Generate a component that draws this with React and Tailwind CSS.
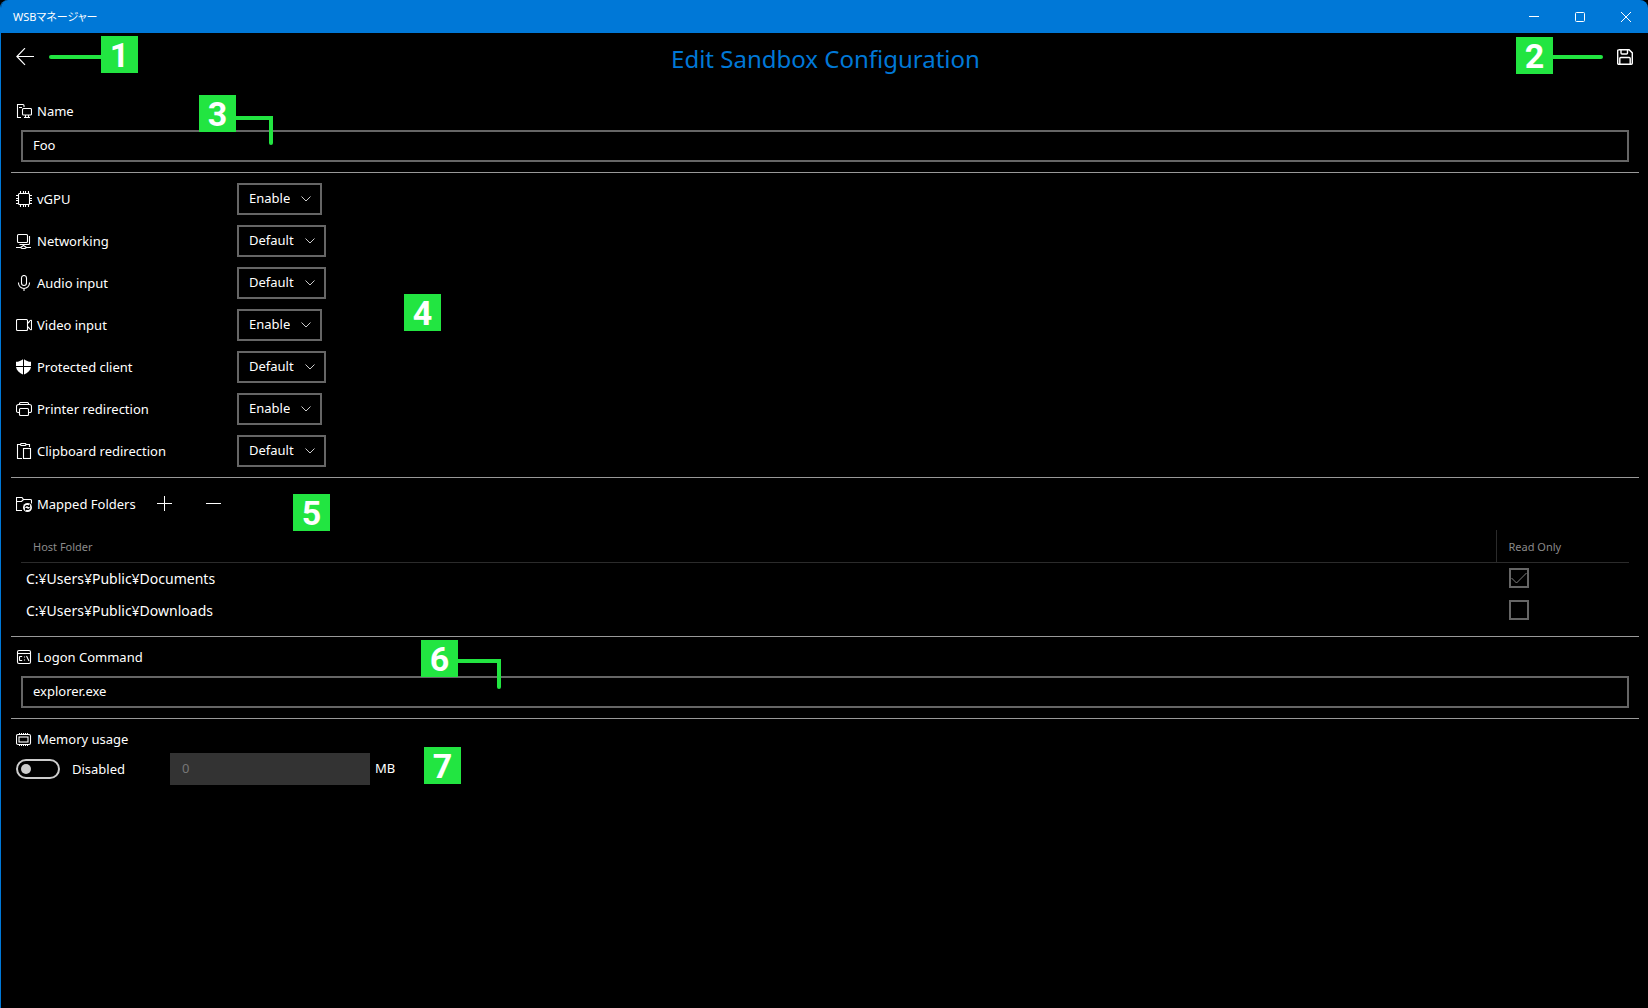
import React, { useState } from 'react';

function Icon({ children, className = '' }) {
  return (
    <svg
      viewBox="0 0 16 16"
      className={`h-4 w-4 shrink-0 ${className}`}
      fill="none"
      stroke="currentColor"
      strokeWidth="1.100"
      aria-hidden="true"
    >
      {children}
    </svg>
  );
}

const icons = {
  name: (
    <Icon>
      <path d="M5 14.500H1.500v-13h5.500a1 1 0 0 1 1 1V4M3 4.500h3" />
      <rect x="6.500" y="5.500" width="9" height="6.500" rx="1" />
      <path d="M9.500 12v2.500M12.500 12v2.500M8 14.500h6" />
    </Icon>
  ),
  gpu: (
    <Icon>
      <rect x="2.500" y="2.500" width="11" height="11" rx="1" />
      <path d="M4.500 0v2.500M7.500 0v2.500M9.500 0v2.500M12.500 0v2.500M4.500 13.500V16M7.500 13.500V16M9.500 13.500V16M12.500 13.500V16M0 4.500h2.500M0 7.500h2.500M0 9.500h2.500M0 12.500h2.500M13.500 4.500H16M13.500 7.500H16M13.500 9.500H16M13.500 12.500H16" />
    </Icon>
  ),
  network: (
    <Icon>
      <rect x="1.500" y="1.500" width="10" height="8" rx="1" />
      <path d="M13.500 3v7.500a1 1 0 0 1-1 1H3.500M0 14.500h4.500M10.500 14.500H15M7.500 11.500v1M4.500 14.500l3-2 3 2-1.500 1H6z" />
    </Icon>
  ),
  mic: (
    <Icon>
      <rect x="5.500" y=".5" width="5" height="10" rx="2.500" />
      <path d="M2.500 7.500v.5a5.500 5.500 0 0 0 11 0v-.5M8 13v3" />
    </Icon>
  ),
  video: (
    <Icon>
      <rect x=".5" y="2.500" width="11" height="11" rx="1" />
      <path d="M11.500 6.500l3-3c.5-.4 1-.2 1 .4v8.200c0 .6-.5.8-1 .4l-3-3" />
    </Icon>
  ),
  shield: (
    <Icon>
      <path
        stroke="none"
        fill="currentColor"
        d="M7 .2V7H0V2.800C2.700 2.700 5 1.800 7 .2zM8 .2c2 1.600 4.300 2.500 7 2.600V7H8zM0 8h7v7.600C3.500 14 .5 11.500 0 8zM8 8h7c-.5 3.500-3.500 6-7 7.600z"
      />
    </Icon>
  ),
  printer: (
    <Icon>
      <path d="M3.500 11.500H2a1.500 1.500 0 0 1-1.500-1.500V5.500A2 2 0 0 1 2.500 3.500h11a2 2 0 0 1 2 2v4.500a1.500 1.500 0 0 1-1.500 1.500h-1.500" />
      <path d="M3.500 3.500V2.500a1 1 0 0 1 1-1h7a1 1 0 0 1 1 1V3.500" />
      <rect x="3.500" y="7.500" width="9" height="7" rx="1" />
    </Icon>
  ),
  clipboard: (
    <Icon>
      <path d="M6 15.500H1.500v-14h3M10 1.500h3.500V4" />
      <rect x="4.500" y=".5" width="5.500" height="2" rx="1" />
      <rect x="7.500" y="5.500" width="7" height="10" />
    </Icon>
  ),
  folder: (
    <Icon>
      <path d="M6 14.500H.500v-13h5.500l1.500 2h7a1 1 0 0 1 1 1v3M.5 5.500h5L7.500 3.500" />
      <circle cx="11.500" cy="11.500" r="4.500" fill="currentColor" stroke="none" />
      <path className="stroke-black" d="M9 11.500a2.500 2.500 0 0 1 4-1.500M14 11.500a2.500 2.500 0 0 1-4 1.500M13.500 8.500V10.500H11.500M9.500 14.500v-2h2" />
    </Icon>
  ),
  console: (
    <Icon>
      <rect x="1.500" y="1.500" width="13" height="13" rx="1.500" />
      <path d="M1.500 4.500h13" />
      <path d="M6.200 7.500H4a.5.5 0 0 0-.5.5v3a.5.5 0 0 0 .5.500h2.200M8.500 7.500v1M8.500 10.500v1M10.500 7l2.500 5" />
    </Icon>
  ),
  memory: (
    <Icon>
      <rect x=".5" y="3.500" width="14" height="10" rx="1.500" />
      <rect x="3" y="6" width="9" height="5" />
      <path strokeDasharray="1 1" d="M3 2.500h10M3 14.500h10" />
    </Icon>
  ),
};

function Badge({ n, className }) {
  return (
    <span
      className={`absolute z-10 flex h-[37px] w-[37px] items-center justify-center bg-[#22e541] font-[Roboto,Arial,sans-serif] text-[34px] leading-none font-bold text-white ${className}`}
    >
      {n}
    </span>
  );
}

function Line({ className }) {
  return <span className={`absolute z-10 bg-[#22e541] ${className}`} />;
}

function SectionLabel({ icon, children, htmlFor }) {
  return (
    <label htmlFor={htmlFor} className="flex h-5 items-center gap-1 pl-[5px]">
      {icons[icon]}
      <span className="pt-[2px] pl-px">{children}</span>
    </label>
  );
}

const settings = [
  ['vgpu', 'gpu', 'vGPU', 'Enable'],
  ['net', 'network', 'Networking', 'Default'],
  ['audio', 'mic', 'Audio input', 'Default'],
  ['video', 'video', 'Video input', 'Enable'],
  ['client', 'shield', 'Protected client', 'Default'],
  ['printer', 'printer', 'Printer redirection', 'Enable'],
  ['clip', 'clipboard', 'Clipboard redirection', 'Default'],
];

function Setting({ id, icon, label, initial }) {
  const [value, setValue] = useState(initial);
  return (
    <div className="flex h-8 items-center">
      <div className="w-[226px] shrink-0">
        <SectionLabel icon={icon} htmlFor={id}>
          {label}
        </SectionLabel>
      </div>
      <div className="relative">
        <select
          id={id}
          value={value}
          onChange={(e) => setValue(e.target.value)}
          className="block h-8 appearance-none border-2 border-[#666] bg-black pr-[30px] pl-[10px] text-white [field-sizing:content]"
        >
          <option>Default</option>
          <option>Enable</option>
          <option>Disable</option>
        </select>
        <svg
          viewBox="0 0 10 6"
          className="pointer-events-none absolute top-[13px] right-[11px] h-[6px] w-[10px] text-[#ccc]"
          fill="none"
          stroke="currentColor"
          aria-hidden="true"
        >
          <path d="M.5.5 5 5 9.500.5" />
        </svg>
      </div>
    </div>
  );
}

function FolderRow({ path, readOnly }) {
  return (
    <tr className="h-8">
      <td className="pt-[2px] pl-[5px] text-sm">{path}</td>
      <td className="pl-[13px]">
        <span className="relative block h-5 w-5">
          <input
            type="checkbox"
            checked={readOnly}
            readOnly
            aria-label={`Read only: ${path}`}
            className="block h-5 w-5 appearance-none border-2 border-[#666]"
          />
          {readOnly && (
            <svg viewBox="0 0 20 20" className="pointer-events-none absolute inset-0 h-5 w-5 text-[#808080]" fill="none" stroke="currentColor" aria-hidden="true">
              <path d="M2.500 10 7.500 15 17.500 5" />
            </svg>
          )}
        </span>
      </td>
    </tr>
  );
}

const field = 'block h-8 w-full border-2 border-[#666] bg-black px-[10px] pb-[2px] text-white outline-none';

export default function App() {
  return (
    <div className="min-h-screen bg-black font-['Noto_Sans','Noto_Sans_CJK_JP',sans-serif] text-[13px] text-white">
      <div className="flex min-h-screen flex-col overflow-hidden rounded-t-lg border-l border-[#0078d7]">
        <header className="flex h-[33px] items-center justify-between bg-[#0078d7] pl-3">
          <span className="pt-[2px] text-[11px] [font-feature-settings:'palt']">WSBマネージャー</span>
          <div className="flex h-full">
            <button aria-label="Minimize" className="flex w-[46px] items-center justify-center">
              <svg width="10" height="10" stroke="white" fill="none"><path d="M0 4.500h10" /></svg>
            </button>
            <button aria-label="Maximize" className="flex w-[46px] items-center justify-center">
              <svg width="10" height="10" stroke="white" fill="none"><rect x=".5" y=".5" width="9" height="9" rx="1" /></svg>
            </button>
            <button aria-label="Close" className="flex w-[45px] items-center justify-center">
              <svg width="10" height="10" stroke="white" fill="none"><path d="M0 0l10 10M10 0 0 10" /></svg>
            </button>
          </div>
        </header>

        <div className="relative flex h-12 items-center justify-between pr-[15px] pl-[15px]">
          <button aria-label="Back" className="h-[18px] w-[18px]">
            <svg viewBox="0 0 18 18" fill="none" stroke="white" strokeWidth="1.200" className="h-[18px] w-[18px]">
              <path d="M9 .2.900 8.500 9 16.800M.900 8.500H18" />
            </svg>
          </button>
          <h1 className="pt-1 text-2xl text-[#0078d7]">Edit Sandbox Configuration</h1>
          <button aria-label="Save" className="h-4 w-4">
            <svg viewBox="0 0 16 16" fill="none" stroke="white" strokeWidth="1.400" className="h-4 w-4">
              <path d="M1.600.7h10.500l3.200 3.200v10.400a1 1 0 0 1-1 1H1.700a1 1 0 0 1-1-1V1.700a1 1 0 0 1 1-1z" />
              <path d="M4 .7v3.300a1 1 0 0 0 1 1h4.500a1 1 0 0 0 1-1V.7M2.800 15.300V9.500a1 1 0 0 1 1-1h8.400a1 1 0 0 1 1 1v5.800" />
            </svg>
          </button>
          <Badge n="1" className="top-[3px] left-[100px]" />
          <Line className="top-[22px] left-[48px] h-1 w-[53px] rounded-l-full" />
          <Badge n="2" className="top-1 right-[95px]" />
          <Line className="top-[22px] right-[45px] h-1 w-[51px] rounded-r-full" />
        </div>

        <main className="mr-[9px] ml-[10px] divide-y divide-[#999]">
          <section className="relative pt-5 pb-[10px]">
            <SectionLabel icon="name" htmlFor="name">Name</SectionLabel>
            <div className="px-[10px] pt-[9px]">
              <input id="name" defaultValue="Foo" className={field} />
            </div>
            <Badge n="3" className="top-[14px] left-[188px]" />
            <Line className="top-[35px] left-[225px] h-1 w-[37px] rounded-r-xs" />
            <Line className="top-[35px] left-[258px] h-[29px] w-1 rounded-b-full" />
          </section>

          <section className="relative flex flex-col gap-[10px] py-[10px]">
            {settings.map(([id, icon, label, initial]) => (
              <Setting key={id} id={id} icon={icon} label={label} initial={initial} />
            ))}
            <Badge n="4" className="top-[121px] left-[393px]" />
          </section>

          <section className="relative pt-4 pb-[10px]">
            <div className="flex h-5 items-center">
              <SectionLabel icon="folder">Mapped Folders</SectionLabel>
              <div className="flex gap-[34px] pb-[2px] pl-[21px]">
                <button aria-label="Add folder" className="h-[15px] w-[15px]">
                  <svg width="15" height="15" stroke="white"><path d="M0 7.500h15M7.500 0v15" /></svg>
                </button>
                <button aria-label="Remove folder" className="h-[15px] w-[15px]">
                  <svg width="15" height="15" stroke="white"><path d="M0 7.500h15" /></svg>
                </button>
              </div>
            </div>
            <div className="px-[10px] pt-4">
              <table className="w-full border-collapse text-left">
                <thead>
                  <tr className="h-8 border-b border-[#2b2b2b] text-[11px] text-[#8a8a8a]">
                    <th className="pt-[2px] pl-3 font-normal">Host Folder</th>
                    <th className="w-[133px] border-l border-[#2b2b2b] pt-[2px] pl-3 font-normal">Read Only</th>
                  </tr>
                </thead>
                <tbody>
                  <FolderRow path="C:¥Users¥Public¥Documents" readOnly />
                  <FolderRow path="C:¥Users¥Public¥Downloads" readOnly={false} />
                </tbody>
              </table>
            </div>
            <Badge n="5" className="top-4 left-[282px]" />
          </section>

          <section className="relative pt-[10px] pb-[10px]">
            <SectionLabel icon="console" htmlFor="logon">Logon Command</SectionLabel>
            <div className="px-[10px] pt-[9px]">
              <input id="logon" defaultValue="explorer.exe" className={field} />
            </div>
            <Badge n="6" className="top-[3px] left-[410px]" />
            <Line className="top-[22px] left-[447px] h-1 w-[43px] rounded-r-xs" />
            <Line className="top-[22px] left-[486px] h-[30px] w-1 rounded-b-full" />
          </section>

          <section className="relative pt-[10px]">
            <SectionLabel icon="memory" htmlFor="memory">Memory usage</SectionLabel>
            <div className="flex items-center pt-1 pl-[5px]">
              <label className="flex w-[154px] items-center gap-3">
                <span className="relative block h-5 w-11">
                  <input type="checkbox" role="switch" className="block h-5 w-11 appearance-none rounded-full border-2 border-[#ccc]" />
                  <span className="pointer-events-none absolute top-[5px] left-[5px] h-[10px] w-[10px] rounded-full bg-[#ccc]" />
                </span>
                <span className="pt-[2px]">Disabled</span>
              </label>
              <input id="memory" disabled defaultValue="0" className="h-8 w-[200px] bg-[#333] px-3 pb-[2px] text-[#777]" />
              <label htmlFor="memory" className="pl-[5px]">MB</label>
            </div>
            <Badge n="7" className="top-[28px] left-[413px]" />
          </section>
        </main>
      </div>
    </div>
  );
}
